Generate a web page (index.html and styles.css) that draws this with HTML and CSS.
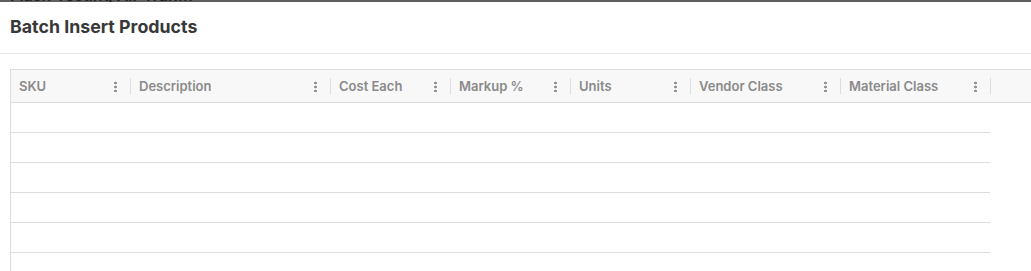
FILE: index.html
```html
<!DOCTYPE html>
<html lang="en">
<head>
    <meta charset="UTF-8">
    <title>Batch Insert Products</title>
    <link rel="stylesheet" href="styles.css">
</head>
<body>

<div class="backdrop">
    <span class="backdrop-text">Flash Testing Air Tran...</span>
</div>

<div class="modal">
    <div class="modal-title">Batch Insert Products</div>

    <div class="modal-body">
        <div class="grid">
            <div class="grid-header">
                <div class="hcell w120"><span class="hlabel">SKU</span><span class="menu"></span><span class="sep"></span></div>
                <div class="hcell w200"><span class="hlabel">Description</span><span class="menu"></span><span class="sep"></span></div>
                <div class="hcell w120"><span class="hlabel">Cost Each</span><span class="menu"></span><span class="sep"></span></div>
                <div class="hcell w120"><span class="hlabel">Markup %</span><span class="menu"></span><span class="sep"></span></div>
                <div class="hcell w120"><span class="hlabel">Units</span><span class="menu"></span><span class="sep"></span></div>
                <div class="hcell w150"><span class="hlabel">Vendor Class</span><span class="menu"></span><span class="sep"></span></div>
                <div class="hcell w150"><span class="hlabel">Material Class</span><span class="menu"></span><span class="sep"></span></div>
            </div>
            <div class="grid-body">
                <div class="row"></div>
                <div class="row"></div>
                <div class="row"></div>
                <div class="row"></div>
                <div class="row"></div>
                <div class="row"></div>
            </div>
        </div>
    </div>
</div>

</body>
</html>
```

FILE: styles.css
```css
body {
    margin: 0;
    background-color: #ffffff;
    font-family: Inter, "Liberation Sans", sans-serif;
    overflow: hidden;
}

.backdrop {
    height: 2px;
    background-color: #5e5e5e;
    overflow: hidden;
    padding-left: 10px;
}

.backdrop-text {
    display: block;
    margin-top: -13px;
    font-size: 16px;
    line-height: 16px;
    font-weight: 600;
    color: #1e1e1e;
}

.modal {
    background-color: #ffffff;
}

.modal-title {
    height: 48px;
    padding: 0 0 3px 10px;
    display: flex;
    align-items: center;
    font-size: 17.8px;
    font-weight: 700;
    color: #383838;
    border-bottom: 1px solid #e6e6e6;
}

.modal-body {
    padding: 15px 0 0 10px;
}

.grid {
    border-left: 1px solid #dddddd;
    border-top: 1px solid #dddddd;
}

.grid-header {
    display: flex;
    height: 32px;
    background-color: #f8f8f8;
    border-bottom: 1px solid #dddddd;
}

.hcell {
    display: flex;
    align-items: center;
    box-sizing: border-box;
    padding-left: 8px;
    flex-shrink: 0;
}

.w120 { width: 120px; }
.w200 { width: 200px; }
.w150 { width: 150px; }

.hlabel {
    flex: 1;
    font-size: 13px;
    font-weight: 600;
    color: #8a8a8a;
}

.menu {
    width: 3px;
    height: 11px;
    margin-right: 13px;
    background: radial-gradient(circle, #959595 1.3px, transparent 1.6px) 0 0 / 3px 4px repeat-y;
}

.sep {
    width: 1px;
    height: 16px;
    background-color: #dddddd;
}

.row {
    width: 979px;
    height: 29px;
    border-bottom: 1px solid #dddddd;
}
```
